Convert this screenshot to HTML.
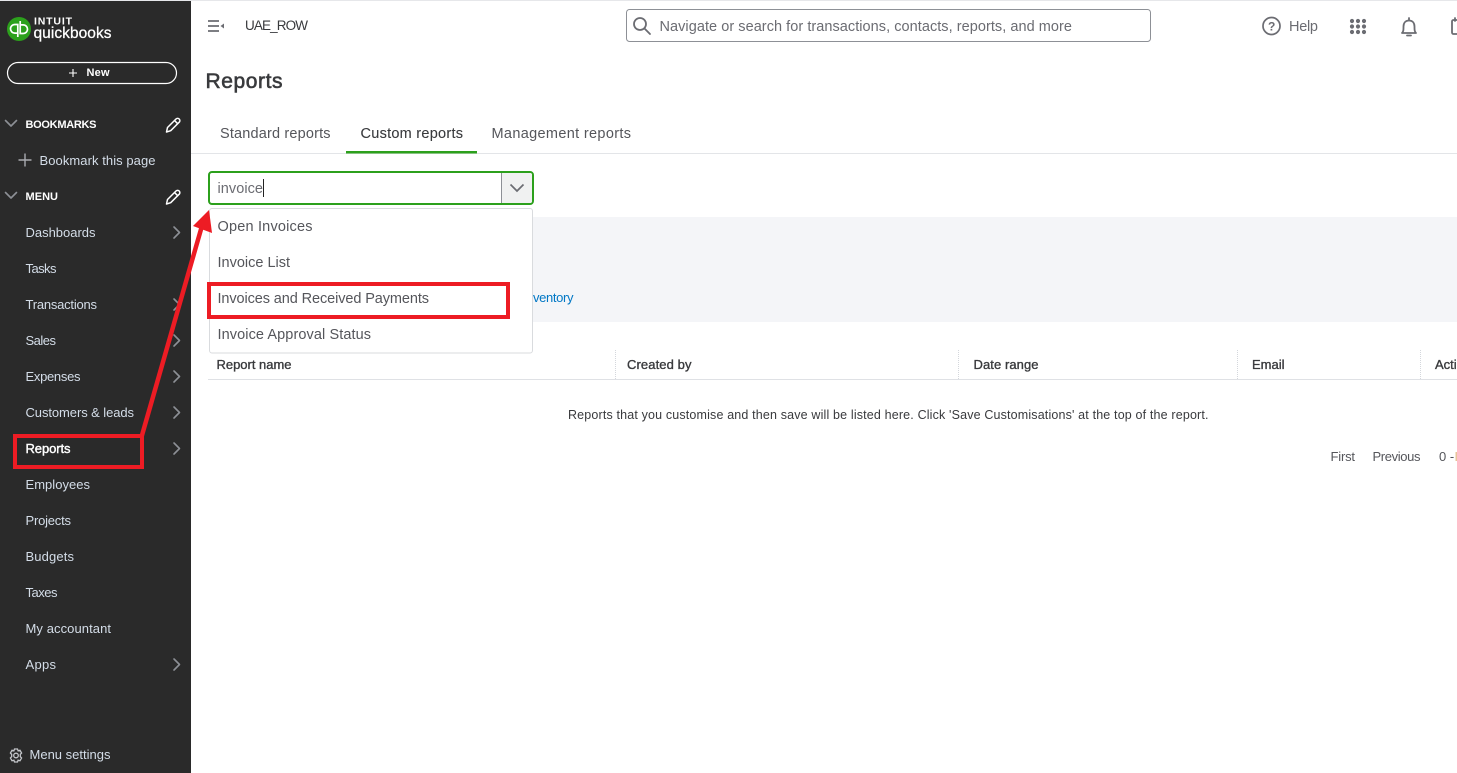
<!DOCTYPE html>
<html lang="en">
<head>
<meta charset="utf-8">
<title>Reports</title>
<style>
html,body{margin:0;padding:0;background:#fff;width:1457px;height:773px;overflow:hidden}
svg{display:block}
text{font-family:"Liberation Sans",sans-serif;font-size:13px;white-space:pre}
.s{fill:#d4dde8}
.w{fill:#fff;stroke:#fff;stroke-width:.4px}
.g{fill:#6b6c72;font-size:14.5px}
.d{fill:#55565b;font-size:14.5px}
.h{fill:#393a3d;stroke:#393a3d;stroke-width:.35px}
.n{fill:none;stroke:#8d9096;stroke-width:1.6;stroke-linecap:round;stroke-linejoin:round}
.i{fill:none;stroke:#6b6c72;stroke-width:1.8;stroke-linecap:round;stroke-linejoin:round}
.p{fill:none;stroke:#fff;stroke-width:1.5;stroke-linejoin:round}
</style>
</head>
<body>
<svg width="1457" height="773" viewBox="0 0 1457 773" xmlns="http://www.w3.org/2000/svg">
<rect width="1457" height="773" fill="#fff"/>
<rect width="1457" height="1" fill="#e6e7ea"/>

<!-- Sidebar -->
<rect y="1" width="191" height="772" fill="#2a2a2a"/>
<circle cx="19" cy="29" r="12" fill="#2ca01c"/>
<g fill="none" stroke="#fff" stroke-width="1.7">
<path d="M17.800 37v-12.500h-3a4.300 4.300 0 0 0 0 8.600h3"/>
<path d="M20.200 21v12.500h3a4.300 4.300 0 0 0 0-8.600h-3"/>
</g>
<text x="34" y="24.500" fill="#fff" style="font-size:10.500px;font-weight:700" textLength="38" lengthAdjust="spacing">INTUIT</text>
<text x="33.500" y="38" fill="#fff" style="font-size:15.500px;stroke:#fff;stroke-width:.25px" textLength="78" lengthAdjust="spacing">quickbooks</text>

<rect x="7.500" y="62.500" width="169" height="21" rx="10.500" fill="none" stroke="#fff" stroke-width="1.200"/>
<path d="M73 69v8M69 73h8" stroke="#fff" stroke-width="1.100"/>
<text x="86.500" y="76" fill="#fff" style="font-size:11px;font-weight:700" textLength="23" lengthAdjust="spacing">New</text>

<path class="n" d="M5.500 120.500l5.500 5.500 5.500-5.500"/>
<text x="25.500" y="128" fill="#fff" style="font-size:11px;font-weight:700" textLength="71" lengthAdjust="spacing">BOOKMARKS</text>
<path class="p" d="M166.500 132l1-4.500 8.500-8.500a1.900 1.900 0 0 1 3.200 3.200l-8.500 8.500zM174.500 120.500l3.200 3.200"/>
<path d="M25 153.500v13M18.500 160h13" stroke="#a9abb0" stroke-width="1.400"/>
<text class="s" x="39.500" y="165" textLength="116" lengthAdjust="spacing">Bookmark this page</text>

<path class="n" d="M5.500 192.500l5.500 5.500 5.500-5.500"/>
<text x="25.500" y="200" fill="#fff" style="font-size:11px;font-weight:700" textLength="32.500" lengthAdjust="spacing">MENU</text>
<path class="p" d="M166.500 204l1-4.500 8.500-8.500a1.900 1.900 0 0 1 3.200 3.200l-8.500 8.500zM174.500 192.500l3.200 3.200"/>

<text class="s" x="25.500" y="237" textLength="70" lengthAdjust="spacing">Dashboards</text>
<text class="s" x="25.500" y="273" textLength="31" lengthAdjust="spacing">Tasks</text>
<text class="s" x="25.500" y="309" textLength="71.500" lengthAdjust="spacing">Transactions</text>
<text class="s" x="25.500" y="345" textLength="30.500" lengthAdjust="spacing">Sales</text>
<text class="s" x="25.500" y="381" textLength="55" lengthAdjust="spacing">Expenses</text>
<text class="s" x="25.500" y="417" textLength="108.500" lengthAdjust="spacing">Customers &amp; leads</text>
<text class="w" x="25.500" y="453" textLength="45" lengthAdjust="spacing">Reports</text>
<text class="s" x="25.500" y="489" textLength="64.500" lengthAdjust="spacing">Employees</text>
<text class="s" x="25.500" y="525" textLength="45.500" lengthAdjust="spacing">Projects</text>
<text class="s" x="25.500" y="561" textLength="48.500" lengthAdjust="spacing">Budgets</text>
<text class="s" x="25.500" y="597" textLength="32" lengthAdjust="spacing">Taxes</text>
<text class="s" x="25.500" y="633" textLength="85.500" lengthAdjust="spacing">My accountant</text>
<text class="s" x="25.500" y="669" textLength="30.500" lengthAdjust="spacing">Apps</text>

<g class="n">
<path d="M174 227l5.500 5.500-5.500 5.500"/>
<path d="M174 299l5.500 5.500-5.500 5.500"/>
<path d="M174 335l5.500 5.500-5.500 5.500"/>
<path d="M174 371l5.500 5.500-5.500 5.500"/>
<path d="M174 407l5.500 5.500-5.500 5.500"/>
<path d="M174 443l5.500 5.500-5.500 5.500"/>
<path d="M174 659l5.500 5.500-5.500 5.500"/>
</g>

<g fill="none" stroke="#c3c5c9" stroke-width="1.300">
<circle cx="16" cy="755.500" r="2.300"/>
<path d="M14.500 749h3l.6 1.800 1.900-.5 1.600 2.700-1.300 1.400v2.200l1.300 1.400-1.600 2.700-1.900-.5-.6 1.800h-3l-.6-1.800-1.900.5-1.600-2.700 1.300-1.400v-2.200l-1.300-1.400 1.600-2.700 1.900.5z"/>
</g>
<text class="s" x="29.500" y="759" textLength="81" lengthAdjust="spacing">Menu settings</text>

<!-- Top bar -->
<path d="M208 21h11M208 26h11M208 31h11" stroke="#6b6c72" stroke-width="1.800"/>
<path d="M220.500 26l3.500-2.500v5z" fill="#6b6c72"/>
<text x="245" y="30" fill="#393a3d" style="font-size:13.500px" textLength="63" lengthAdjust="spacing">UAE_ROW</text>

<rect x="626.500" y="9.500" width="524" height="32" rx="3" fill="#fff" stroke="#8d9096"/>
<circle cx="640" cy="24" r="6" fill="none" stroke="#6b6c72" stroke-width="1.800"/>
<path d="M644.500 28.500l5.500 5.500" stroke="#6b6c72" stroke-width="1.800" stroke-linecap="round"/>
<text x="659.500" y="31" fill="#6b6c72" style="font-size:14.500px" textLength="412.500" lengthAdjust="spacing">Navigate or search for transactions, contacts, reports, and more</text>

<circle cx="1271.500" cy="26" r="8.500" fill="none" stroke="#6b6c72" stroke-width="1.700"/>
<text x="1268" y="30.500" fill="#6b6c72" style="font-size:12px;font-weight:700">?</text>
<text class="g" x="1289" y="31" textLength="29" lengthAdjust="spacing">Help</text>
<g fill="#6b6c72">
<circle cx="1352" cy="21" r="2.100"/><circle cx="1358" cy="21" r="2.100"/><circle cx="1364" cy="21" r="2.100"/>
<circle cx="1352" cy="26.500" r="2.100"/><circle cx="1358" cy="26.500" r="2.100"/><circle cx="1364" cy="26.500" r="2.100"/>
<circle cx="1352" cy="32" r="2.100"/><circle cx="1358" cy="32" r="2.100"/><circle cx="1364" cy="32" r="2.100"/>
</g>
<path class="i" d="M1402 33c1.500-1.500 1.500-3 1.500-6.500 0-3.500 2-6 5.500-6s5.500 2.500 5.500 6c0 3.500 0 5 1.500 6.500zM1409 18v2.500M1407 35.500h4"/>
<path class="i" d="M1457 20h-3.500a1.500 1.500 0 0 0-1.500 1.500v11a1.500 1.500 0 0 0 1.500 1.500h3.500M1455 18v3"/>

<!-- Heading -->
<text x="205.500" y="88" fill="#393a3d" style="font-size:21px;stroke:#393a3d;stroke-width:.6px" textLength="77" lengthAdjust="spacing">Reports</text>

<!-- Tabs -->
<text class="d" x="220" y="138" textLength="110.500" lengthAdjust="spacing">Standard reports</text>
<text class="h" style="font-size:14.500px;stroke-width:.1px" x="360.500" y="138" textLength="102.500" lengthAdjust="spacing">Custom reports</text>
<text class="d" x="491.500" y="138" textLength="139.500" lengthAdjust="spacing">Management reports</text>
<rect x="191" y="153" width="1266" height="1" fill="#e3e5e8"/>
<rect x="346" y="151" width="131" height="2.500" fill="#2ca01c"/>

<!-- Info panel -->
<rect x="209" y="217" width="1248" height="105" fill="#f4f5f8"/>
<text x="533" y="302" fill="#0077c5" style="font-size:13px" textLength="40.500" lengthAdjust="spacing">ventory</text>

<!-- Table -->
<g stroke="#d4d7dc" stroke-dasharray="1 1">
<path d="M615.500 350v29M958.500 350v29M1237.500 350v29M1420.500 350v29"/>
</g>
<rect x="208" y="379" width="1249" height="1" fill="#dfe1e5"/>
<text class="h" x="216.500" y="369" textLength="75" lengthAdjust="spacing">Report name</text>
<text class="h" x="627" y="369" textLength="64.500" lengthAdjust="spacing">Created by</text>
<text class="h" x="973.500" y="369" textLength="65" lengthAdjust="spacing">Date range</text>
<text class="h" x="1252" y="369" textLength="32.500" lengthAdjust="spacing">Email</text>
<text class="h" x="1435" y="369">Actions</text>
<text x="568" y="419" fill="#393a3d" style="font-size:12.500px" textLength="640.500" lengthAdjust="spacing">Reports that you customise and then save will be listed here. Click 'Save Customisations' at the top of the report.</text>
<text x="1330.500" y="461" fill="#55565b" textLength="24.500" lengthAdjust="spacing">First</text>
<text x="1372.500" y="461" fill="#55565b" textLength="48" lengthAdjust="spacing">Previous</text>
<text x="1439" y="461" fill="#55565b">0 -</text>
<rect x="1455.500" y="452" width="1.500" height="9" fill="#e8c49a"/>

<!-- Combo box -->
<rect x="209" y="172" width="324" height="32" rx="3" fill="#fff" stroke="#2ca01c" stroke-width="2"/>
<path d="M501.500 173v30h28.500a2 2 0 0 0 2-2v-26a2 2 0 0 0-2-2z" fill="#f0f1f1"/>
<path d="M501.500 173v30" stroke="#8d9096"/>
<path d="M510.500 184.500l6.500 6.500 6.500-6.500" fill="none" stroke="#6b6c72" stroke-width="1.700"/>
<text x="217.500" y="193" fill="#6b6c72" style="font-size:14.500px" textLength="45.500" lengthAdjust="spacing">invoice</text>
<rect x="263" y="179" width="1" height="18" fill="#222"/>

<!-- Dropdown -->
<rect x="209.500" y="208.500" width="323" height="144.500" rx="2.500" fill="#fff" stroke="#d9dbde"/>
<text class="d" x="217.500" y="231" textLength="95" lengthAdjust="spacing">Open Invoices</text>
<text class="d" x="217.500" y="267" textLength="72.500" lengthAdjust="spacing">Invoice List</text>
<text class="d" x="217.500" y="303" textLength="211.500" lengthAdjust="spacing">Invoices and Received Payments</text>
<text class="d" x="217.500" y="339" textLength="153.500" lengthAdjust="spacing">Invoice Approval Status</text>

<!-- Annotations -->
<rect x="15" y="436" width="127" height="31" fill="none" stroke="#ed1c24" stroke-width="4"/>
<rect x="209" y="284" width="299" height="33" fill="none" stroke="#ed1c24" stroke-width="4"/>
<path d="M141.500 437L201.500 227.500" stroke="#ed1c24" stroke-width="4.500" fill="none"/>
<path d="M209 210L212 233L193 226z" fill="#ed1c24"/>
</svg>
</body>
</html>
